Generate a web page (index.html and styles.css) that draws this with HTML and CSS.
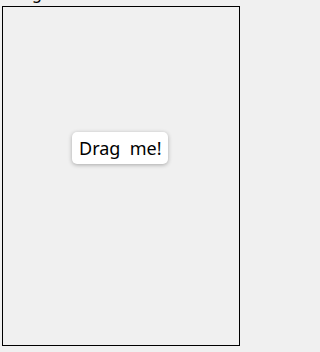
FILE: index.html
```html
<!DOCTYPE html>
<html>
<head>
<meta charset="utf-8">
<link rel="stylesheet" href="styles.css">
</head>
<body>
<div class="title">Drag</div>
<div class="area">
  <div class="item" style="left: 69px; top: 125px;">Drag&nbsp; me!</div>
</div>
</body>
</html>
```
FILE: styles.css
```css
html, body {
  margin: 0;
  padding: 0;
  background: #f0f0f0;
  overflow: hidden;
}
body {
  width: 244px;
  height: 352px;
  font-family: "Noto Sans", "Open Sans", sans-serif;
  color: #000;
}
.title {
  font-size: 16px;
  line-height: 20px;
  height: 6px;
  margin-top: -17px;
  padding-left: 5px;
  position: relative;
}
.area {
  position: relative;
  margin: 17px 0 0 2px;
  width: 236px;
  height: 338px;
  border: 1px solid #000;
  background: #f0f0f0;
}
.item {
  position: absolute;
  background: #fff;
  border-radius: 5px;
  box-shadow: 0 1px 4px rgba(0, 0, 0, 0.3);
  font-size: 18px;
  line-height: 22px;
  padding: 5px 7px 5px 7px;
  width: 82px;
  white-space: nowrap;
}
```
